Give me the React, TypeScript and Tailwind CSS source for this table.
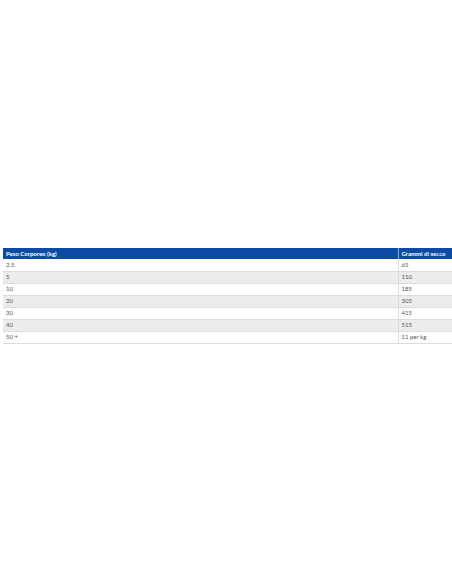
const rows: [string, string][] = [
  ["2.5", "65"],
  ["5", "110"],
  ["10", "185"],
  ["20", "305"],
  ["30", "415"],
  ["40", "515"],
  ["50 +", "11 per kg"],
];

export default function App() {
  return (
    <div className="h-[584px] w-[452px] overflow-hidden bg-white pt-[248px] pl-[3px] font-['Lato','Liberation_Sans',sans-serif]">
      <table className="w-[470px] border-collapse text-[6px] leading-none">
        <thead>
          <tr className="h-[11px] bg-[#0b4ba5] text-white">
            <th className="w-[395px] border-r border-[#8fa9d4] px-[3px] text-left font-bold">Peso Corporeo (kg)</th>
            <th className="px-[3px] text-left font-bold">Grammi di secco</th>
          </tr>
        </thead>
        <tbody>
          {rows.map(([kg, g], i) => (
            <tr
              key={kg}
              className={`h-[12px] border-b border-[#dcdcdc] text-[#555] ${i % 2 === 1 ? "bg-[#ececec]" : "bg-white"}`}
            >
              <td className="border-r border-[#dcdcdc] px-[3px]">{kg}</td>
              <td className="px-[3px]">{g}</td>
            </tr>
          ))}
        </tbody>
      </table>
    </div>
  );
}
